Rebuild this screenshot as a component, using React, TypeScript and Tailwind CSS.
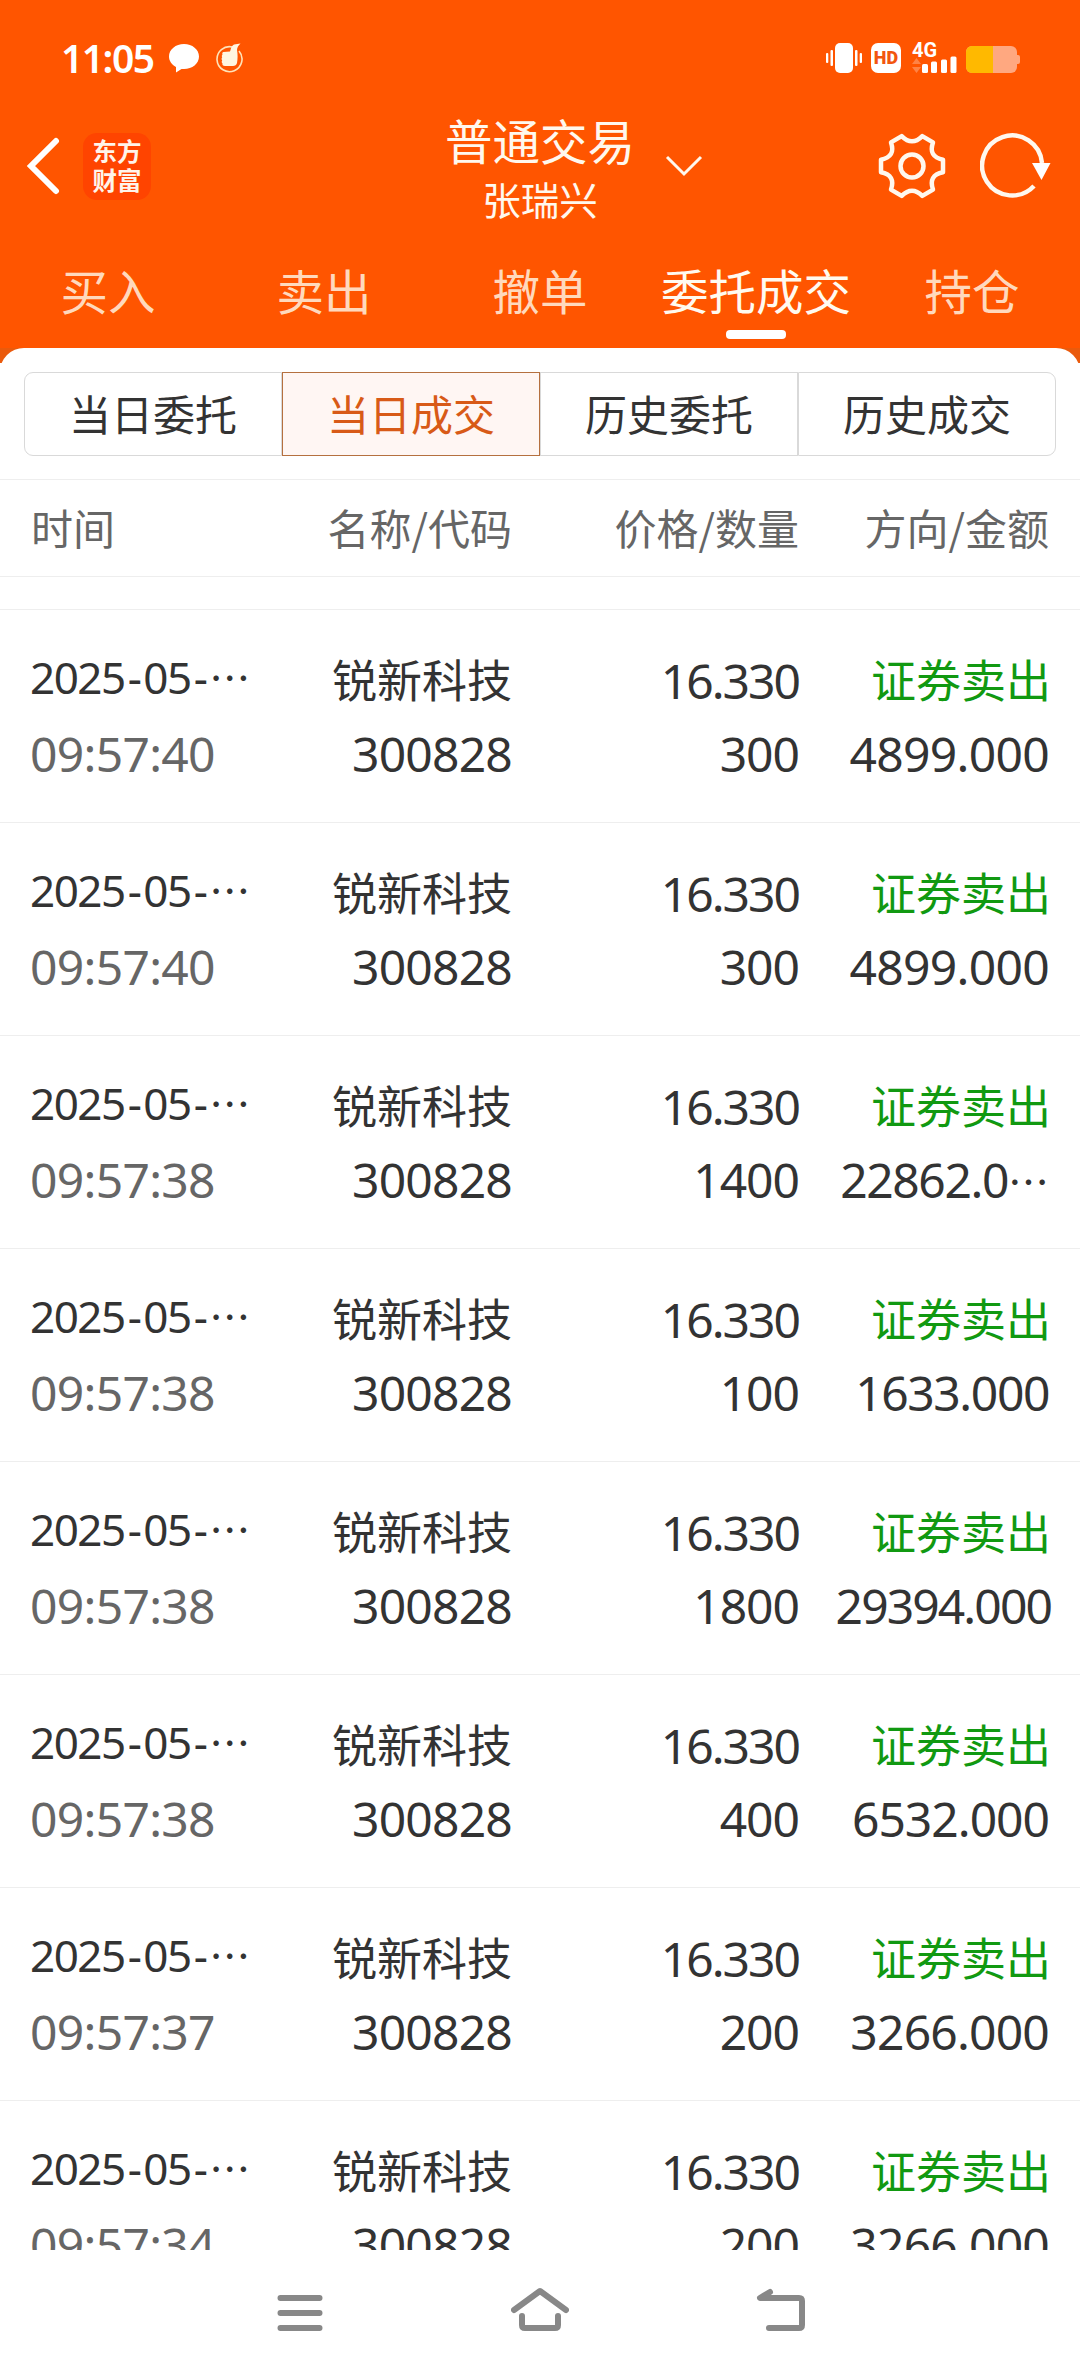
import React from "react";

const tabs = ["买入", "卖出", "撤单", "委托成交", "持仓"];
const segments = ["当日委托", "当日成交", "历史委托", "历史成交"];

const trades = [
  { time: "09:57:40", qty: "300", amount: "4899.000", track: "tracking-[-0.7px]" },
  { time: "09:57:40", qty: "300", amount: "4899.000", track: "tracking-[-0.7px]" },
  { time: "09:57:38", qty: "1400", amount: "22862.0", track: "tracking-[-1.4px]", cut: true },
  { time: "09:57:38", qty: "100", amount: "1633.000", track: "tracking-[-1.4px]" },
  { time: "09:57:38", qty: "1800", amount: "29394.000", track: "tracking-[-1.9px] -mr-[2px]" },
  { time: "09:57:38", qty: "400", amount: "6532.000", track: "tracking-[-1px]" },
  { time: "09:57:37", qty: "200", amount: "3266.000", track: "tracking-[-0.8px]" },
  { time: "09:57:34", qty: "200", amount: "3266.000", track: "tracking-[-0.8px]" },
];

function Dots() {
  return <span className="font-['Noto_Sans_CJK_SC',sans-serif] text-[41px] tracking-normal">…</span>;
}

function StatusBar() {
  return (
    <div className="flex h-[108px] items-start justify-between pt-[38px] pl-[61px] pr-[60px]">
      <div className="flex h-10 items-center">
        <span className="w-[108px] font-['Noto_Sans',sans-serif] text-[39px] leading-10 font-semibold tracking-[-1.5px]">11:05</span>
        <svg width="30" height="30" viewBox="0 0 30 30" fill="currentColor">
          <path d="M15 1C6.700 1 0 6.500 0 13.500c0 4.300 2.700 8.200 7 10.500v5.500l5.500-3.600c.8.100 1.700.1 2.500.1 8.300 0 15-5.500 15-12.500S23.300 1 15 1z" />
        </svg>
        <svg className="ml-[17px]" width="28" height="30" viewBox="0 0 28 30">
          <path d="M16.500 4A12.500 12.500 0 1 0 23 8" fill="none" stroke="#ffe3b8" strokeWidth="1.600" />
          <path d="M7.500 9l6.500-.5c1-2 1-5.500 4-7l6.500-1c-2 2-3.500 4-3.500 6.500.8 4 .8 9 0 13-.4 2-2 3-4 3H9c-2 0-3-1-2.500-2.500-1-1-1-2-.3-3-.8-1-.8-2.200 0-3.200-.6-1-.5-2 .3-2.800-.5-1.200-.2-2.200 1-2.500z" fill="#fff6e0" />
        </svg>
      </div>
      <div className="flex h-10 items-center">
        <svg width="36" height="30" viewBox="0 0 36 30" fill="currentColor">
          <rect x="9" width="18" height="30" rx="5" />
          <rect x="4.500" y="7" width="2.500" height="16" rx="1" />
          <rect x="0" y="10" width="2.300" height="10" rx="1" />
          <rect x="29" y="7" width="2.500" height="16" rx="1" />
          <rect x="33.700" y="10" width="2.300" height="10" rx="1" />
        </svg>
        <span className="ml-[9px] flex h-[30px] w-[30px] items-center justify-center rounded-[7px] bg-white font-['Roboto',sans-serif] text-[18px] leading-[30px] font-black text-[#f2560f]">
          HD
        </span>
        <div className="ml-[11px] flex h-[30px] w-[45px] flex-col">
          <span className="-mt-[2px] h-[16px] font-['Roboto',sans-serif] text-[20px] leading-[18px] font-bold">4G</span>
          <svg className="-mt-[14px]" width="45" height="30" viewBox="0 0 45 30" fill="currentColor">
            <path d="M0 21l4.500-6 4.500 6zM0 24l4.500 6 4.500-6z" fill="#ff8345" />
            <rect x="10" y="21" width="6" height="9" rx="1.500" />
            <rect x="19" y="18.500" width="6" height="11.500" rx="1.500" />
            <rect x="29" y="16.500" width="6" height="13.500" rx="1.500" />
            <rect x="38.500" y="13.500" width="6" height="16.500" rx="1.500" />
          </svg>
        </div>
        <svg className="ml-[9px]" width="54" height="30" viewBox="0 0 54 30">
          <rect y="3" width="51" height="27" rx="6" fill="#ffa880" />
          <path d="M50 12h2a2 2 0 0 1 2 2v5a2 2 0 0 1-2 2h-2z" fill="#ffa880" />
          <path d="M6 3h21v27H6a6 6 0 0 1-6-6V9a6 6 0 0 1 6-6z" fill="#ffb900" />
        </svg>
      </div>
    </div>
  );
}

function NavBar() {
  return (
    <div className="grid h-[116px] grid-cols-[1fr_auto_1fr] items-center">
      <div className="flex items-center pl-[25px]">
        <svg width="36" height="58" viewBox="0 0 36 58" fill="none" stroke="currentColor" strokeWidth="6">
          <path d="M31 4L6 29l25 25" strokeLinecap="round" />
        </svg>
        <div className="ml-[22px] flex h-[67px] w-[68px] flex-col items-center justify-center rounded-[14px] bg-[#ff4400] pb-[3px] text-[24.5px] leading-[29px] font-bold text-[#fff4ea]">
          <span>东方</span>
          <span>财富</span>
        </div>
      </div>
      <div className="relative flex h-[116px] flex-col items-center pt-[3px] text-[#fff8ee]">
        <span className="text-[47.5px] leading-[58px]">普通交易</span>
        <span className="text-[38.5px] leading-[58px]">张瑞兴</span>
        <svg className="absolute top-[46px] left-[220px]" width="38" height="24" viewBox="0 0 38 24" fill="none" stroke="currentColor" strokeWidth="3">
          <path d="M2 3l17 17L36 3" />
        </svg>
      </div>
      <div className="flex items-center justify-end gap-[34px] pr-[28px]">
        <svg width="68" height="68" viewBox="-34 -34 68 68" fill="none" stroke="#fff8ee" strokeWidth="4.500" strokeLinejoin="round">
          <path d="M31 6.300Q16 9.200 21 23.600L10.300 29.900Q0 19.500-10.300 29.900L-21 23.600Q-16 9.200-31 6.300V-6.300Q-16-9.200-21-23.600L-10.300-29.900Q0-19.500 10.300-29.900L21-23.600Q16-9.200 31-6.300Z" />
          <circle r="11.500" />
        </svg>
        <svg width="72" height="68" viewBox="0 0 72 68" fill="none" stroke="#fff8ee" strokeWidth="4.500">
          <path d="M62 31A30 30 0 1 0 54 54" />
          <path d="M52 31h18.500L61.500 48z" fill="#fff" stroke="none" />
        </svg>
      </div>
    </div>
  );
}

export default function App() {
  return (
    <div className="flex h-[2376px] w-[1080px] flex-col overflow-hidden bg-white font-['Noto_Sans_CJK_SC',sans-serif] text-[#333]" lang="zh-CN">
      <header className="h-[348px] shrink-0 bg-[#ff5500] text-white">
        <StatusBar />
        <NavBar />
        <nav className="grid h-[124px] grid-cols-5 pt-[33px]">
          {tabs.map((tab) => {
            const active = tab === "委托成交";
            return (
              <div key={tab} className="flex flex-col items-center">
                <span className={`text-[47.5px] leading-[66px] whitespace-nowrap ${active ? "text-[#fffaf0]" : "text-[#ffd9bd]"}`}>{tab}</span>
                {active && <span className="mt-[7px] h-[9px] w-[60px] rounded-[4px] bg-white" />}
              </div>
            );
          })}
        </nav>
      </header>

      <section className="shrink-0 bg-[linear-gradient(#ea5a0c_15px,#fff_15px)]">
        <div className="rounded-t-[24px] bg-white px-6 pt-6 pb-[23px]">
          <div className="grid h-[84px] grid-cols-4">
            {segments.map((item) => (
              <div
                key={item}
                className={`flex items-center justify-center border pb-[3px] text-[42px] first:rounded-l-[9px] last:rounded-r-[9px] ${
                  item === "当日成交" ? "border-[#b5703f] bg-[#fff6f3] text-[#d85a17]" : "border-[#d9d9d9]"
                }`}
              >
                {item}
              </div>
            ))}
          </div>
        </div>
      </section>

      <div className="grid h-[98px] shrink-0 grid-cols-[300px_212px_287px_250px] items-center border-y border-[#eee] pb-[3px] text-[42px] text-[#666]">
        <span className="pl-[31px]">时间</span>
        <span className="text-right">名称/代码</span>
        <span className="text-right">价格/数量</span>
        <span className="text-right">方向/金额</span>
      </div>

      <main className="min-h-0 flex-1 overflow-hidden pt-[32px]">
        {trades.map((trade, i) => (
          <div key={i} className="grid h-[213px] grid-cols-[300px_212px_287px_250px] border-t border-[#eee] pt-[34px] font-['Noto_Sans','Noto_Sans_CJK_SC',sans-serif] text-[48px]">
            <div className="flex flex-col pl-[30px]">
              <span className="h-[73px] text-[44px] leading-[65px] tracking-[-1.5px] whitespace-nowrap">
                2025<span className="px-[3px]">-</span>05<span className="px-[3px]">-</span>
                <Dots />
              </span>
              <span className="leading-[73px] tracking-[-0.7px] text-[#666]">{trade.time}</span>
            </div>
            <div className="flex flex-col text-right">
              <span className="h-[73px] font-['Noto_Sans_CJK_SC',sans-serif] text-[45px] leading-[70px]">锐新科技</span>
              <span className="leading-[73px] tracking-[-0.8px]">300828</span>
            </div>
            <div className="flex flex-col text-right">
              <span className="leading-[73px] tracking-[-2px]">16.330</span>
              <span className="leading-[73px] tracking-[-1px]">{trade.qty}</span>
            </div>
            <div className="flex flex-col text-right">
              <span className="-mr-[2px] h-[73px] font-['Noto_Sans_CJK_SC',sans-serif] text-[45px] leading-[70px] text-[#119911]">证券卖出</span>
              <span className={`leading-[73px] whitespace-nowrap ${trade.track}`}>
                {trade.amount}
                {trade.cut && <Dots />}
              </span>
            </div>
          </div>
        ))}
      </main>

      <footer className="flex h-[126px] shrink-0 items-start justify-center gap-[182px] bg-white pt-[36px] text-[#888]">
        <svg width="58" height="48" viewBox="0 0 58 48" fill="none" stroke="currentColor" strokeWidth="6" strokeLinecap="round">
          <path d="M9.500 12h39M9.500 27h39M9.500 42h39" />
        </svg>
        <svg width="58" height="48" viewBox="0 0 58 48" fill="none" stroke="currentColor" strokeWidth="6" strokeLinecap="round" strokeLinejoin="round">
          <path d="M3 24L29 5l26 19M11 30v9q0 3 3 3h30q3 0 3-3v-9" />
        </svg>
        <svg width="58" height="48" viewBox="0 0 58 48" fill="none" stroke="currentColor" strokeWidth="6" strokeLinecap="round" strokeLinejoin="round">
          <path d="M19 6L9 12h39q3 0 3 3v24q0 3-3 3H18" />
        </svg>
      </footer>
    </div>
  );
}
